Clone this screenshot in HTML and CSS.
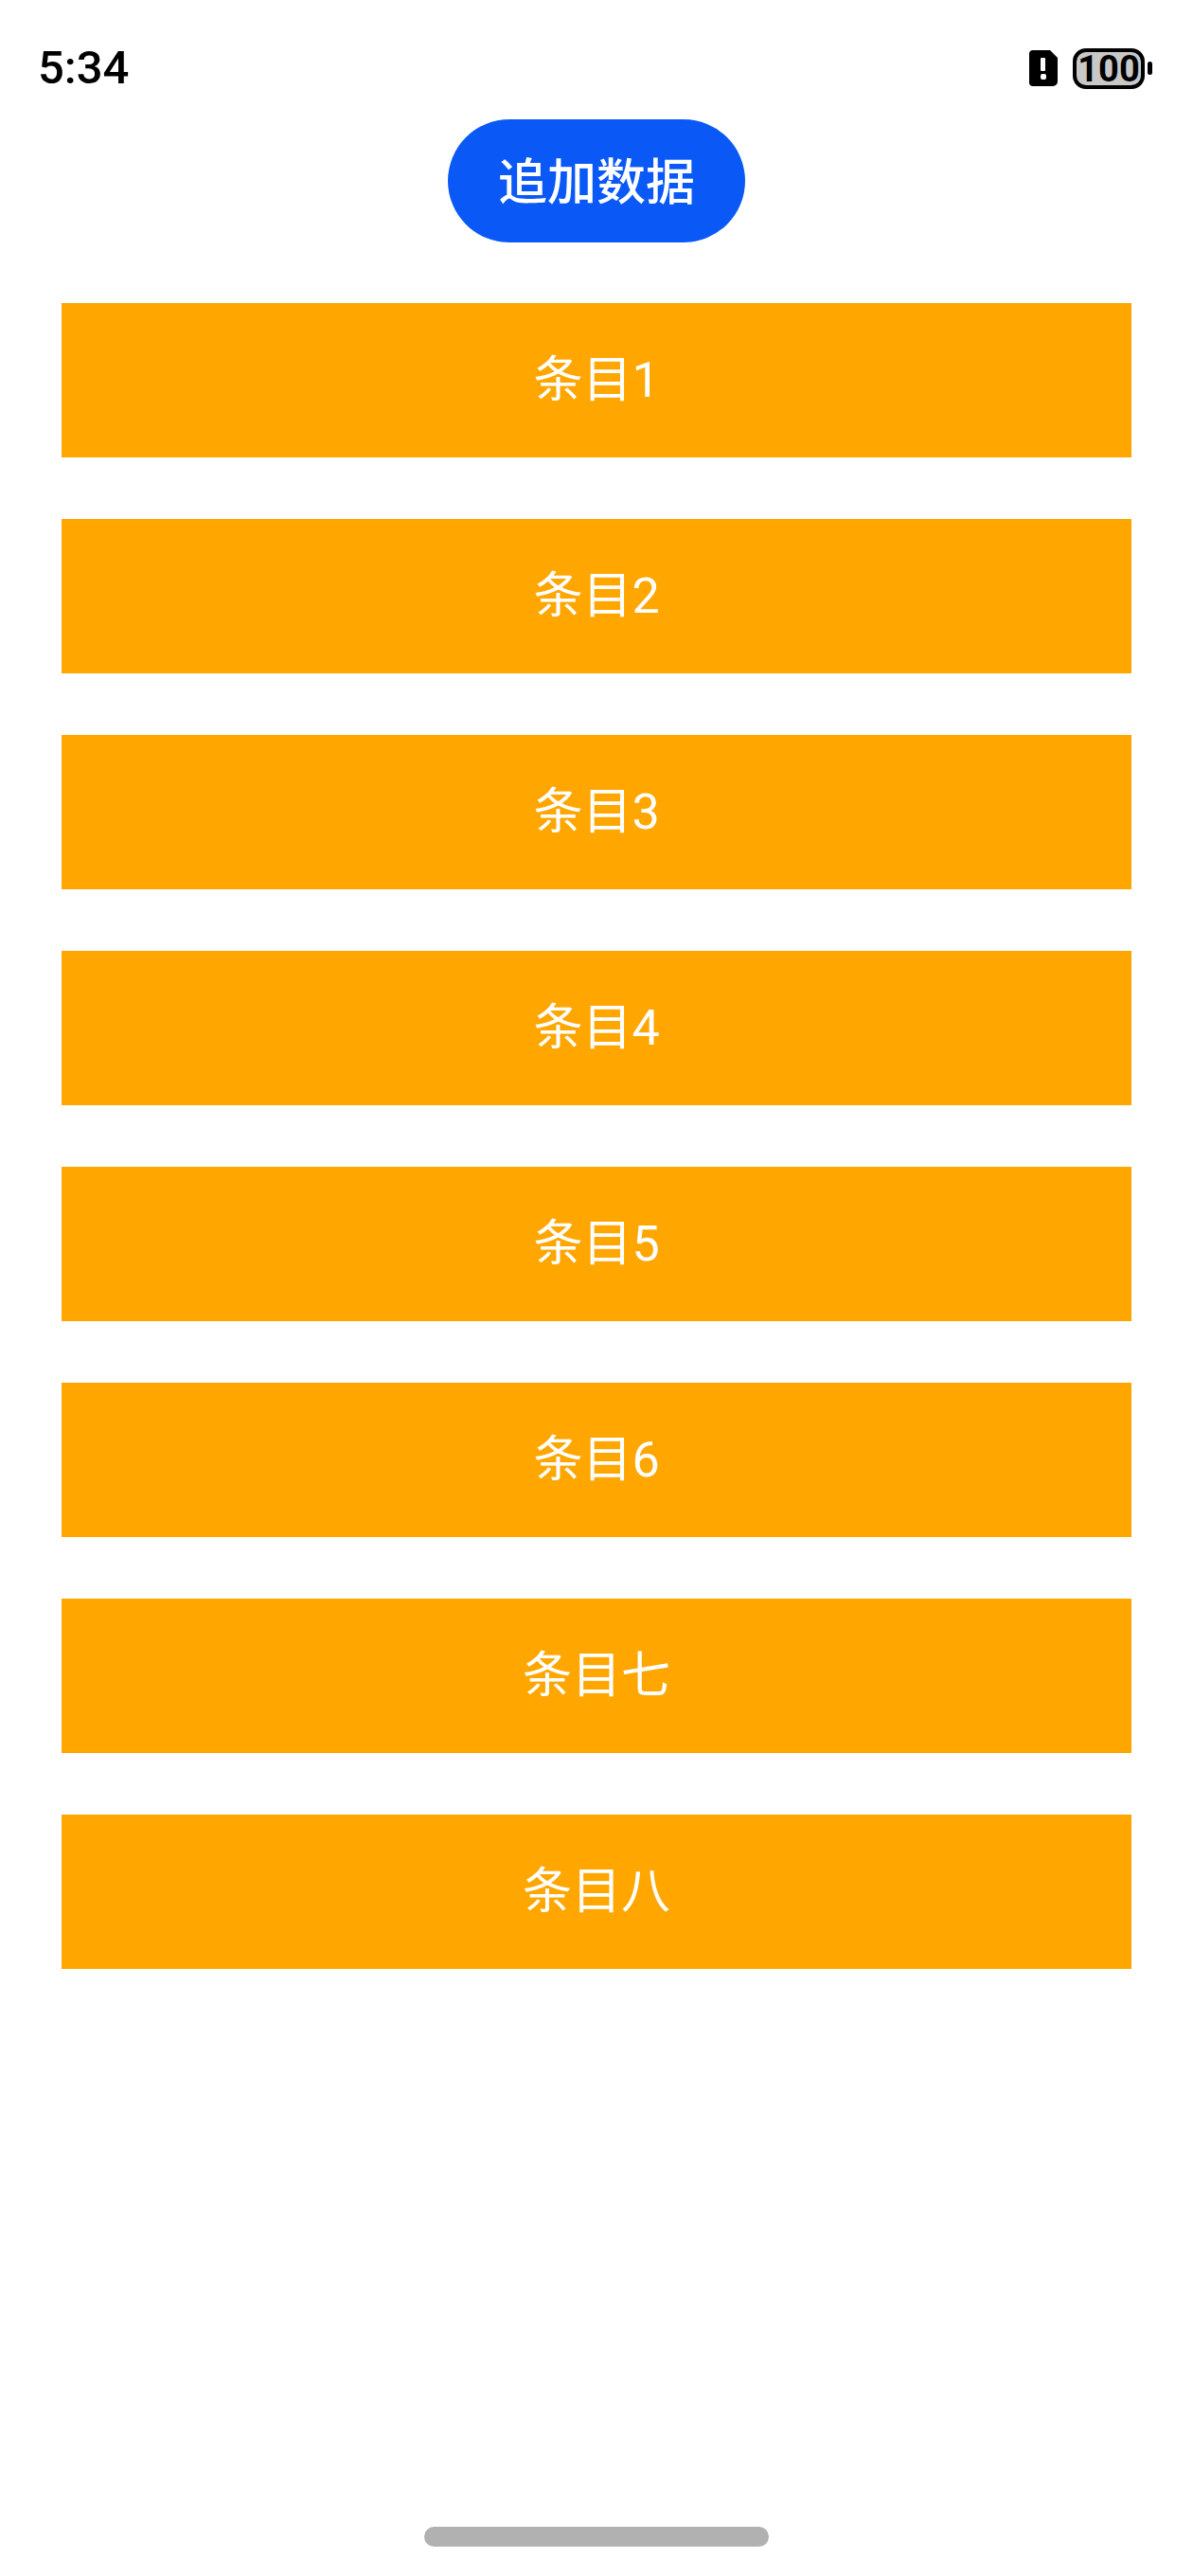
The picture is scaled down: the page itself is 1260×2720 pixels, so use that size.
FILE: index.html
```html
<!DOCTYPE html>
<html lang="zh-CN">
<head>
  <meta charset="UTF-8">
  <meta name="viewport" content="width=device-width, initial-scale=1">
  <title>追加数据</title>
  <link rel="stylesheet" href="styles.css">
</head>
<body>
  <header class="status-bar">
    <span class="time">5:34</span>
    <div class="status-icons">
      <svg class="sim" width="32" height="40" viewBox="0 0 32 40">
        <path d="M5 1h18l8 8v25a5 5 0 0 1-5 5H5a4 4 0 0 1-4-4V5a4 4 0 0 1 4-4z" fill="#000"/>
        <rect x="13" y="9" width="5" height="14" rx="1" fill="#fff"/>
        <rect x="13" y="26" width="6" height="6" rx="2" fill="#fff"/>
      </svg>
      <div class="battery">
        <span class="level">100</span>
        <span class="tip"></span>
      </div>
    </div>
  </header>

  <main>
    <button class="append" type="button">追加数据</button>
    <ul class="list">
      <li>条目1</li>
      <li>条目2</li>
      <li>条目3</li>
      <li>条目4</li>
      <li>条目5</li>
      <li>条目6</li>
      <li>条目七</li>
      <li>条目八</li>
    </ul>
  </main>

  <footer class="home-bar"></footer>
</body>
</html>
```
FILE: styles.css
```css
* {
  box-sizing: border-box;
}

body {
  margin: 0;
  min-height: 100vh;
  display: flex;
  flex-direction: column;
  background: #fff;
  font-family: Roboto, "Noto Sans CJK SC", sans-serif;
  font-size: 52px;
}

.status-bar {
  display: flex;
  justify-content: space-between;
  align-items: center;
  height: 126px;
  padding: 18px 43px 0 40px;
}

.time {
  font-size: 49px;
  font-weight: 500;
  line-height: 60px;
}

.status-icons {
  display: flex;
  align-items: center;
  gap: 15px;
}

.battery {
  display: flex;
  align-items: center;
  gap: 3px;
}

.level {
  width: 76px;
  height: 43px;
  border: 4px solid #000;
  border-radius: 14px;
  background: #c8c8c8;
  font-size: 38px;
  font-weight: 700;
  line-height: 36px;
  text-align: center;
}

.tip {
  width: 5px;
  height: 14px;
  border-radius: 3px;
  background: #000;
}

main {
  flex: 1;
  display: flex;
  flex-direction: column;
  align-items: center;
}

.append {
  height: 130px;
  padding: 0 53px 6px;
  border: none;
  border-radius: 65px;
  background: #0a59f7;
  color: #fff;
  font-family: inherit;
  font-size: 52px;
  font-weight: 500;
  cursor: pointer;
}

.list {
  align-self: stretch;
  display: flex;
  flex-direction: column;
  gap: 65px;
  margin: 0;
  padding: 64px 65px;
  list-style: none;
}

.list li {
  height: 163px;
  background: #ffa600;
  color: #fff;
  line-height: 163px;
  text-align: center;
}

.home-bar {
  width: 364px;
  height: 21px;
  margin: 0 auto 31px;
  border-radius: 11px;
  background: #b1b1b1;
}
```
